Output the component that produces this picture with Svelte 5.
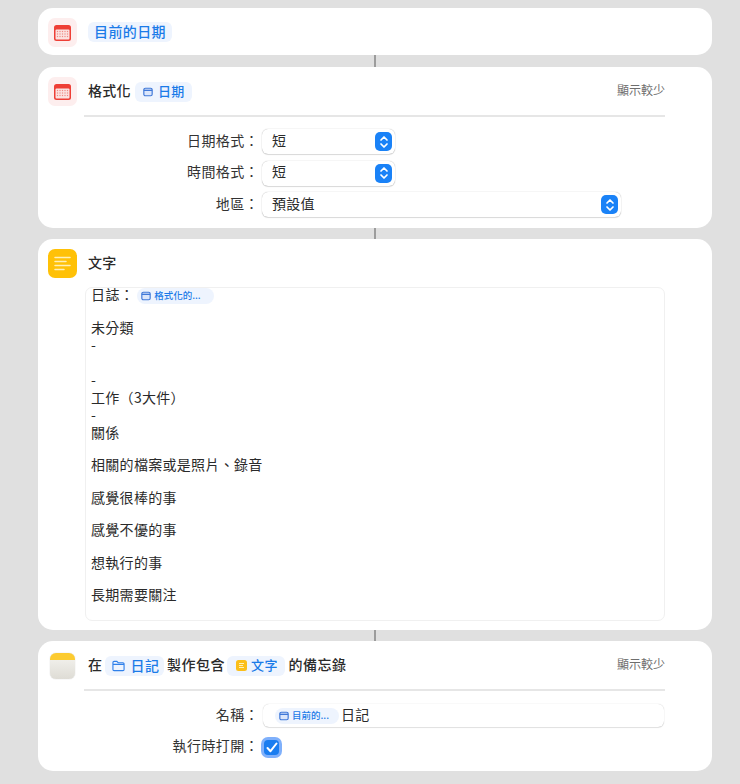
<script>
  const entries = [
    ['未分類', '-', '\u00a0', '-', '工作（3大件）', '-', '關係'],
    ['相關的檔案或是照片、錄音'],
    ['感覺很棒的事'],
    ['感覺不優的事'],
    ['想執行的事'],
    ['長期需要關注']
  ];
  const formats = [
    { label: '日期格式：', value: '短', wide: false },
    { label: '時間格式：', value: '短', wide: false },
    { label: '地區：', value: '預設值', wide: true }
  ];
</script>

{#snippet calendar()}
  <div class="tile cal">
    <svg width="17" height="16" viewBox="0 0 17 16">
      <rect x="0" y="0" width="17" height="16" rx="2.5" fill="#ee3f36" />
      <rect x="1.5" y="4.5" width="14" height="10" rx="1" fill="#fbe3e1" />
      {#each [6.5, 9, 11.5] as y}
        {#each [3.5, 6, 8.5, 11, 13.5] as x}
          <rect x={x - 0.6} y={y - 0.6} width="1.2" height="1.2" fill="#ef8a84" />
        {/each}
      {/each}
    </svg>
  </div>
{/snippet}

{#snippet miniCal(size)}
  <svg width={size} height={size} viewBox="0 0 12 12" class="mini">
    <rect x="1" y="1.5" width="10" height="9" rx="1.8" fill="#dbe6fb" stroke="#3f78d8" stroke-width="1.4" />
    <path d="M1 4h10" stroke="#3f78d8" stroke-width="1.6" />
  </svg>
{/snippet}

<div class="page">
  <section class="card first">
    {@render calendar()}
    <span class="chip big">目前的日期</span>
  </section>

  <div class="link"></div>

  <section class="card">
    <header>
      {@render calendar()}
      <div class="title">
        <span class="lift">格式化</span>
        <span class="chip date-chip">{@render miniCal(10)}日期</span>
      </div>
      <span class="less lift">顯示較少</span>
    </header>
    <div class="rule"></div>
    <div class="rows">
      {#each formats as f}
        <div class="row">
          <span class="label lift">{f.label}</span>
          <div class="select" class:wide={f.wide}>
            <span class="lift">{f.value}</span>
            <span class="stepper">
              <svg width="10" height="14" viewBox="0 0 10 14" fill="none" stroke="#fff" stroke-width="1.7" stroke-linecap="round" stroke-linejoin="round">
                <path d="M2 5l3-3 3 3M2 9l3 3 3-3" />
              </svg>
            </span>
          </div>
        </div>
      {/each}
    </div>
  </section>

  <div class="link short"></div>

  <section class="card text-card">
    <header>
      <div class="tile yellow">
        <svg width="17" height="15" viewBox="0 0 17 15" stroke="#fff0b8" stroke-width="1.5" stroke-linecap="round">
          <path d="M1 1.5h15M1 5.5h11M1 9.5h15M1 13.5h9" />
        </svg>
      </div>
      <div class="title"><span class="lift">文字</span></div>
    </header>
    <div class="textbox">
      <div class="log">日誌：<span class="chip tiny">{@render miniCal(10)}格式化的...</span></div>
      {#each entries as group}
        <div class="group">
          {#each group as line}
            <div>{line}</div>
          {/each}
        </div>
      {/each}
    </div>
  </section>

  <div class="link short"></div>

  <section class="card note-card">
    <header>
      <div class="notes">
        <div class="notes-top"></div>
      </div>
      <div class="title">
        <span class="lift">在</span>
        <span class="chip folder-chip">
          <svg width="13" height="12" viewBox="0 0 14 12" fill="none" stroke="#2f80ea" stroke-width="1.2" class="mini">
            <path d="M1 3V2.2C1 1.5 1.5 1 2.2 1h3l1.4 1.5h5.2c.7 0 1.2.5 1.2 1.2v6c0 .7-.5 1.3-1.2 1.3H2.2C1.5 11 1 10.4 1 9.7V3zM1 4.2h12" />
          </svg>
          日記
        </span>
        <span class="lift">製作包含</span>
        <span class="chip text-chip">
          <svg width="11" height="11" viewBox="0 0 11 11" class="mini">
            <rect width="11" height="11" rx="2.5" fill="#fbbf1a" />
            <path d="M3 3.5h5M3 5.5h4M3 7.5h5" stroke="#fff0b8" stroke-width="1" />
          </svg>
          文字
        </span>
        <span class="lift">的備忘錄</span>
      </div>
      <span class="less lift">顯示較少</span>
    </header>
    <div class="rule"></div>
    <div class="rows">
      <div class="row">
        <span class="label lift">名稱：</span>
        <div class="name-field">
          <span class="chip small">{@render miniCal(10)}目前的...</span>
          <span class="lift">日記</span>
        </div>
      </div>
      <div class="row check-row">
        <span class="label lift">執行時打開：</span>
        <span class="checkbox">
          <svg width="12" height="11" viewBox="0 0 12 11" fill="none" stroke="#fff" stroke-width="2" stroke-linecap="round" stroke-linejoin="round">
            <path d="M1.5 6l3 3.2 6-7.7" />
          </svg>
        </span>
      </div>
    </div>
  </section>
</div>

<style>
  :global(body) {
    margin: 0;
    background: #e0e0e0;
  }

  .page {
    width: 674px;
    margin-left: 38px;
    padding-top: 8px;
    font-family: "Noto Sans CJK TC", "Liberation Sans", sans-serif;
    font-size: 14px;
    letter-spacing: 0.3px;
    color: #2a2a2a;
  }

  .link {
    width: 2px;
    height: 12px;
    margin: 0 auto;
    background: #9c9c9c;
  }

  .link.short {
    height: 11px;
  }

  .card {
    background: #fff;
    border-radius: 15px;
    padding: 10px 47px 0 10px;
  }

  .first {
    height: 47px;
    box-sizing: border-box;
    display: flex;
    align-items: flex-start;
    gap: 11px;
  }

  header {
    display: flex;
    align-items: center;
    height: 29px;
    gap: 11px;
  }

  /* the CJK face sits low in its box, this pulls the glyphs back up */
  .lift {
    padding-bottom: 4px;
  }

  .tile {
    width: 29px;
    height: 29px;
    flex: none;
    border-radius: 7px;
    display: flex;
    align-items: center;
    justify-content: center;
  }

  .cal {
    background: #fdeeee;
  }

  .yellow {
    background: #ffc107;
  }

  .notes {
    width: 25px;
    height: 26px;
    flex: none;
    margin: 0 2px;
    border-radius: 6px;
    overflow: hidden;
    background: linear-gradient(#f6f5f1, #dedcd5);
    box-shadow: 0 0 1px rgba(0, 0, 0, 0.3);
  }

  .notes-top {
    height: 7px;
    background: #fccb30;
  }

  .title {
    flex: 1;
    display: flex;
    align-items: center;
    gap: 4px;
    font-weight: 500;
    white-space: nowrap;
  }

  .note-card .title {
    gap: 2px;
    letter-spacing: 0.5px;
  }

  .note-card .title .chip {
    margin-right: 1.5px;
  }

  .chip {
    display: inline-flex;
    align-items: center;
    box-sizing: border-box;
    gap: 4px;
    height: 20px;
    padding: 0 6px 2px;
    border-radius: 6px;
    background: #eef4fe;
    color: #1b7be8;
    font-weight: 500;
    font-size: 13.5px;
  }

  .chip .mini {
    margin-top: 2px;
  }

  .big {
    margin-top: 4px;
    font-size: 14px;
    letter-spacing: 0.4px;
  }

  .date-chip {
    padding: 0 7px 2px 8px;
    gap: 5px;
    font-size: 13px;
  }

  .folder-chip {
    padding: 0 4px 2px 7px;
    gap: 6px;
    font-size: 14px;
  }

  .text-chip {
    padding: 0 7px 2px 9px;
    gap: 4px;
    font-size: 13px;
  }

  .small,
  .tiny {
    height: 16px;
    font-size: 9.5px;
    border-radius: 8px;
    padding: 0 13px 1px 4px;
    gap: 3px;
    letter-spacing: 0;
  }

  .small {
    padding-right: 10px;
  }

  .small .mini,
  .tiny .mini {
    margin-top: 1px;
  }

  .mini {
    flex: none;
  }

  .less {
    color: #6e6e6e;
    font-size: 12px;
    letter-spacing: 0;
  }

  .rule {
    height: 2px;
    margin: 9px 0 0 36px;
    background: #e6e6e6;
  }

  .rows {
    display: flex;
    flex-direction: column;
    gap: 6.5px;
    padding: 12px 0 11px;
  }

  .row {
    display: flex;
    align-items: center;
    height: 25px;
  }

  .label {
    width: 211px;
    flex: none;
    text-align: right;
    font-size: 14px;
    letter-spacing: 0.4px;
    color: #333;
  }

  .select {
    width: 133px;
    height: 25px;
    box-sizing: border-box;
    margin-left: 3px;
    padding: 0 3px 0 10px;
    display: flex;
    align-items: center;
    justify-content: space-between;
    background: #fff;
    border-radius: 6px;
    box-shadow: 0 0 1px rgba(0, 0, 0, 0.35), 0 1px 1px rgba(0, 0, 0, 0.12);
  }

  .select.wide {
    width: 359px;
  }

  .stepper {
    width: 17px;
    height: 19px;
    background: #1a82f7;
    border-radius: 5px;
    display: flex;
    align-items: center;
    justify-content: center;
  }

  .text-card {
    padding-bottom: 9px;
  }

  .textbox {
    margin: 9px 0 0 37px;
    height: 334px;
    box-sizing: border-box;
    padding: 0 5px;
    border: 1px solid #f0f0f0;
    border-radius: 7px;
    line-height: 17.5px;
    display: flex;
    flex-direction: column;
    gap: 15px;
  }

  .log {
    display: flex;
    align-items: center;
    height: 17.5px;
    margin-top: -2px;
    letter-spacing: 0.4px;
  }

  .log .chip {
    margin: 2px 0 0 3px;
  }

  .note-card .rows {
    padding: 13px 0 13px;
    gap: 9px;
  }

  .note-card .row {
    height: 23px;
  }

  .name-field {
    width: 401px;
    height: 23px;
    box-sizing: border-box;
    margin-left: 4px;
    padding-left: 12px;
    display: flex;
    align-items: center;
    gap: 2px;
    border-radius: 6px;
    box-shadow: 0 0 1px rgba(0, 0, 0, 0.25), 0 1px 1px rgba(0, 0, 0, 0.1);
  }

  .note-card .check-row {
    height: 22px;
  }

  .checkbox {
    width: 15px;
    height: 15px;
    margin-left: 5px;
    background: #1a7df0;
    border-radius: 4px;
    box-shadow: 0 0 0 3px #7fb0fb;
    display: flex;
    align-items: center;
    justify-content: center;
  }
</style>
